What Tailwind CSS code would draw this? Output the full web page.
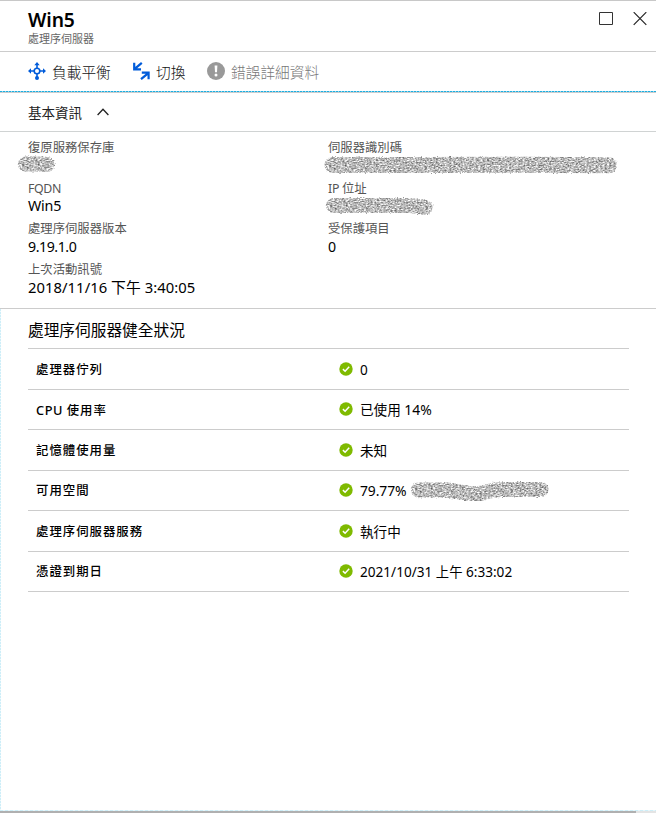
<!DOCTYPE html>
<html lang="zh-Hant">
<head>
<meta charset="utf-8">
<title>Win5</title>
<script src="https://cdn.jsdelivr.net/npm/@tailwindcss/browser@4"></script>
</head>
<body class="bg-white">
<svg class="absolute h-0 w-0" aria-hidden="true">
  <defs>
    <filter id="scribble" filterUnits="userSpaceOnUse" x="0" y="0" width="310" height="24" color-interpolation-filters="sRGB">
      <feTurbulence type="fractalNoise" baseFrequency=".45 .75" numOctaves="3" seed="4" result="n"/>
      <feColorMatrix in="n" values="1 0 0 0 .23  1 0 0 0 .23  1 0 0 0 .23  0 0 0 0 1" result="g"/>
      <feDisplacementMap in="SourceGraphic" in2="n" scale="3" xChannelSelector="R" yChannelSelector="G" result="s"/>
      <feComposite in="g" in2="s" operator="in"/>
    </filter>
    <symbol id="ok" viewBox="0 0 14 14">
      <circle cx="7" cy="7" r="6.7" fill="#7fba00"/>
      <path d="M3.9 7.1 6.1 9.2 10.2 4.8" fill="none" stroke="#fff" stroke-width="1.5"/>
    </symbol>
  </defs>
</svg>
<main class="relative flex h-[813px] w-[656px] flex-col overflow-hidden border-t border-[#c8c8c8] bg-white font-['Noto_Sans','Noto_Sans_CJK_TC',sans-serif] text-black">
  <header class="flex h-[51px] shrink-0 justify-between border-b border-[#ccc] pl-7">
    <div>
      <h1 class="mt-[7px] h-6 text-[19.3px] leading-6 font-semibold tracking-[-0.1px]">Win5</h1>
      <p class="h-[14px] text-[11px] leading-[14px] text-[#666]">處理序伺服器</p>
    </div>
    <div class="flex gap-5 pt-[11px] pr-[9px]">
      <svg class="h-[14px] w-[14px]" viewBox="0 0 14 14"><path d="M.5.5H13.5V12.5H.5Z" fill="none" stroke="#333"/></svg>
      <svg class="h-[14px] w-[14px]" viewBox="0 0 14 14"><path d="M.7.2 13.3 12.8M13.3.2.7 12.8" stroke="#222" stroke-width="1.2"/></svg>
    </div>
  </header>
  <nav class="flex h-[41px] shrink-0 items-center border-b border-[#ccc] pl-7 text-[14.7px] font-light text-[#111]">
    <svg class="relative -top-px mr-[6px] h-[18px] w-[18px]" viewBox="0 0 18 18"><g fill="none" stroke="#015cda" stroke-width="1.6"><circle cx="9" cy="9" r="2.8"/><path d="M9 6.2V2M9 11.8V15M6.2 9H2M11.8 9H16"/></g><path d="M9 0 11.7 3.2H6.3ZM0 9 3 6.2V11.8ZM18 9 15 6.2V11.8Z" fill="#015cda"/><circle cx="9" cy="16" r="2" fill="#015cda"/></svg>
    <span class="w-[81px] pt-px">負載平衡</span>
    <svg class="relative -top-px mr-[6px] h-[18px] w-[17px]" viewBox="0 0 17 18"><g fill="none" stroke="#015cda" stroke-width="2.2"><path d="M1.2.8V7.3H8M2 6.7 8.8.9M8.8 10.7H15.6V17.2M15 11.3 8 17.2"/></g></svg>
    <span class="w-[51px] pt-px">切換</span>
    <svg class="relative -top-px mr-[6px] h-[18px] w-[18px]" viewBox="0 0 18 18"><circle cx="9" cy="9" r="9" fill="#999"/><path d="M7.6 3.5H10.4L10 10.3H8Z" fill="#fff"/><circle cx="9" cy="13" r="1.5" fill="#fff"/></svg>
    <span class="pt-px text-[#777]">錯誤詳細資料</span>
  </nav>
  <div class="absolute top-[90px] left-0 h-px w-full bg-[repeating-linear-gradient(90deg,#1caee0_0_2px,#9bd9ef_2px_3px)]"></div>
  <div class="flex h-[39px] shrink-0 items-center border-b border-[#d0d3d3] pl-7 text-[13.5px] text-[#222]">
    <span class="pt-[2px]">基本資訊</span>
    <svg class="ml-[15px] h-2 w-3" viewBox="0 0 12 8"><path d="M.6 7 6 1.3 11.4 7" fill="none" stroke="#222" stroke-width="1.3"/></svg>
  </div>
  <section class="grid h-[177px] shrink-0 grid-cols-[300px_1fr] border-b border-[#ccc] pt-[7px] pl-7 leading-5 [&_dt]:h-[17px] [&_dt]:text-[12.35px] [&_dt]:leading-[17px] [&_dt]:text-[#555]">
    <dl>
      <dt>復原服務保存庫</dt>
      <dd class="h-6"><svg class="relative -left-[12px] -top-px h-[18px] w-[41px]" viewBox="0 0 41 18"><path d="M9.500 9 L20 8.700 L31 9.500" fill="none" stroke="#000" stroke-width="15" stroke-linecap="round" filter="url(#scribble)"/></svg></dd>
      <dt><span class="tracking-[-0.35px]">FQDN</span></dt>
      <dd class="h-[23px] text-[14.3px] leading-[17px] tracking-[-0.2px]">Win5</dd>
      <dt>處理序伺服器版本</dt>
      <dd class="h-6 text-[14.2px] leading-[19px] tracking-[-0.45px]">9.19.1.0</dd>
      <dt>上次活動訊號</dt>
      <dd class="text-[14.8px] leading-[18px] tracking-[0.05px]">2018/11/16 下午 3:40:05</dd>
    </dl>
    <dl>
      <dt>伺服器識別碼</dt>
      <dd class="h-6"><svg class="relative -left-[5px] h-[18px] w-[296px]" viewBox="0 0 296 18"><path d="M9.500 8.900 L100 9 L200 8.800 L286 9.200" fill="none" stroke="#000" stroke-width="16" stroke-linecap="round" filter="url(#scribble)"/></svg></dd>
      <dt><span class="tracking-[-0.3px]">IP </span>位址</dt>
      <dd class="h-[23px]"><svg class="relative -left-[4px] -top-px h-[21px] w-[110px]" viewBox="0 0 110 21"><path d="M9.500 9.500 L85 9.400 L101 11.500" fill="none" stroke="#000" stroke-width="15" stroke-linecap="round" stroke-linejoin="round" filter="url(#scribble)"/></svg></dd>
      <dt>受保護項目</dt>
      <dd class="text-[14.2px] leading-[19px]">0</dd>
    </dl>
  </section>
  <section class="pr-[27px] pl-7">
    <h2 class="h-[40px] border-b border-[#ccc] text-[15.7px] leading-[42px] font-normal text-black">處理序伺服器健全狀況</h2>
    <div class="text-[13.6px] [&>div]:box-border [&>div]:flex [&>div]:h-[40.5px] [&>div]:items-center [&>div]:border-b [&>div]:border-[#ccc] [&>div]:pl-2 [&>div>b]:w-[303px] [&>div>b]:pt-[3px] [&>div>b]:text-[12.4px] [&>div>b]:font-medium [&>div>b]:tracking-[1px] [&>div>svg:first-of-type]:mr-[7px] [&>div>svg:first-of-type]:h-[14px] [&>div>svg:first-of-type]:w-[14px] [&>div>span]:pt-[2px]">
      <div><b>處理器佇列</b><svg><use href="#ok"/></svg><span>0</span></div>
      <div><b><span class="text-[12.8px] tracking-[0.5px]">CPU </span>使用率</b><svg><use href="#ok"/></svg><span>已使用 <span class="text-[13.9px]">14%</span></span></div>
      <div><b>記憶體使用量</b><svg><use href="#ok"/></svg><span>未知</span></div>
      <div><b>可用空間</b><svg><use href="#ok"/></svg><span class="w-[49px] text-[13.9px] tracking-[-0.1px]">79.77%</span><svg class="h-[22px] w-[143px] shrink-0" viewBox="0 0 143 22"><path d="M9.500 11 L38 11 L55 13.500 Q68 16.500 79 12.500 Q86 10 95 10.500 L132 10.500" fill="none" stroke="#000" stroke-width="15" stroke-linecap="round" stroke-linejoin="round" filter="url(#scribble)"/></svg></div>
      <div><b>處理序伺服器服務</b><svg><use href="#ok"/></svg><span>執行中</span></div>
      <div><b>憑證到期日</b><svg><use href="#ok"/></svg><span>2021/10/31 <span class="text-[13.3px]">上午</span> 6:33:02</span></div>
    </div>
  </section>
  <div class="absolute top-[308px] left-0 h-[502px] w-px bg-[repeating-linear-gradient(180deg,#cdeef8_0_2px,#eef9fd_2px_3px)]"></div>
  <div class="absolute bottom-[2px] left-0 h-px w-full bg-[repeating-linear-gradient(90deg,#cdeef8_0_3px,#e9f6fa_3px_5px)]"></div>
  <div class="absolute bottom-0 left-0 flex h-[2px] w-full bg-[#e4e4e4]"><div class="w-[636px] bg-[#b0b0b0]"></div></div>
</main>
</body>
</html>
